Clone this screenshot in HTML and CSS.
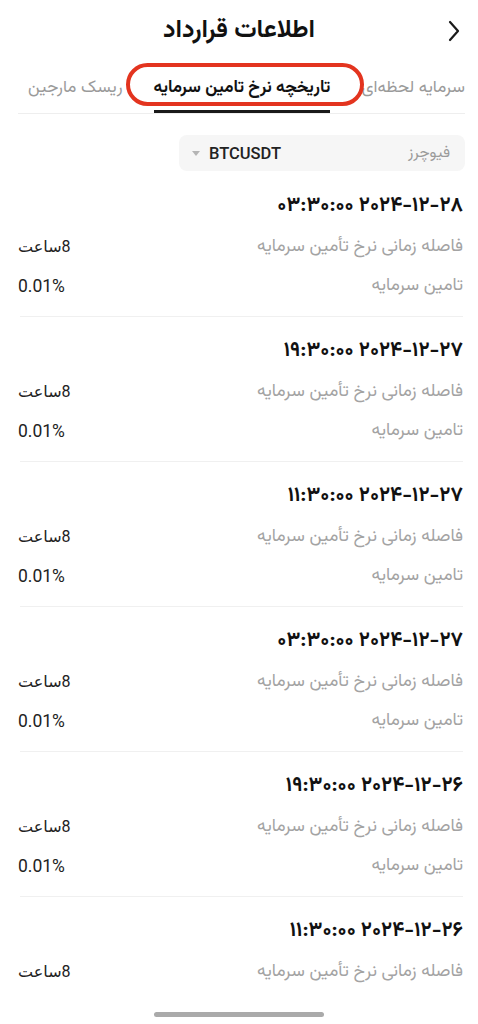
FILE: index.html
```html
<!DOCTYPE html>
<html lang="fa" dir="rtl">
<head>
<meta charset="utf-8">
<title>اطلاعات قرارداد</title>
<link rel="stylesheet" href="styles.css">
</head>
<body>
<div class="app">
  <header class="topbar">
    <div class="back">
      <svg width="12" height="22" viewBox="0 0 12 22"><path d="M2 2 L10 11 L2 20" fill="none" stroke="#1a1a1a" stroke-width="2.2" stroke-linecap="round" stroke-linejoin="round"/></svg>
    </div>
    <h1 class="title">اطلاعات قرارداد</h1>
    <div class="spacer"></div>
  </header>

  <nav class="tabs">
    <div class="tab">سرمایه لحظه‌ای</div>
    <div class="tab active">تاریخچه نرخ تامین سرمایه</div>
    <div class="tab">ریسک مارجین</div>
  </nav>

  <div class="filter-row">
    <div class="select">
      <span class="select-label">فیوچرز</span>
      <span class="select-value"><span class="sym">BTCUSDT</span><span class="caret"></span></span>
    </div>
  </div>

  <main class="records">
    <section class="record">
      <div class="date">۰۳:۳۰:۰۰ ۲۰۲۴-۱۲-۲۸</div>
      <div class="kv"><span class="k">فاصله زمانی نرخ تأمین سرمایه</span><span class="v">8ساعت</span></div>
      <div class="kv"><span class="k">تامین سرمایه</span><span class="v num">0.01%</span></div>
    </section>
    <section class="record">
      <div class="date">۱۹:۳۰:۰۰ ۲۰۲۴-۱۲-۲۷</div>
      <div class="kv"><span class="k">فاصله زمانی نرخ تأمین سرمایه</span><span class="v">8ساعت</span></div>
      <div class="kv"><span class="k">تامین سرمایه</span><span class="v num">0.01%</span></div>
    </section>
    <section class="record">
      <div class="date">۱۱:۳۰:۰۰ ۲۰۲۴-۱۲-۲۷</div>
      <div class="kv"><span class="k">فاصله زمانی نرخ تأمین سرمایه</span><span class="v">8ساعت</span></div>
      <div class="kv"><span class="k">تامین سرمایه</span><span class="v num">0.01%</span></div>
    </section>
    <section class="record">
      <div class="date">۰۳:۳۰:۰۰ ۲۰۲۴-۱۲-۲۷</div>
      <div class="kv"><span class="k">فاصله زمانی نرخ تأمین سرمایه</span><span class="v">8ساعت</span></div>
      <div class="kv"><span class="k">تامین سرمایه</span><span class="v num">0.01%</span></div>
    </section>
    <section class="record">
      <div class="date">۱۹:۳۰:۰۰ ۲۰۲۴-۱۲-۲۶</div>
      <div class="kv"><span class="k">فاصله زمانی نرخ تأمین سرمایه</span><span class="v">8ساعت</span></div>
      <div class="kv"><span class="k">تامین سرمایه</span><span class="v num">0.01%</span></div>
    </section>
    <section class="record">
      <div class="date">۱۱:۳۰:۰۰ ۲۰۲۴-۱۲-۲۶</div>
      <div class="kv"><span class="k">فاصله زمانی نرخ تأمین سرمایه</span><span class="v">8ساعت</span></div>
      <div class="kv"><span class="k">تامین سرمایه</span><span class="v num">0.01%</span></div>
    </section>
  </main>

  <div class="home-area"><div class="home-bar"></div></div>
</div>
</body>
</html>
```

FILE: styles.css
```css
* { box-sizing: border-box; }
html, body { margin: 0; padding: 0; background: #fff; }
body {
  font-family: "Vazirmatn", "Noto Sans Arabic", "DejaVu Sans", sans-serif;
  color: #1a1a1a;
  direction: rtl;
}
.app { width: 478px; }

.topbar {
  height: 60px;
  display: grid;
  grid-template-columns: 1fr auto 1fr;
  align-items: center;
}
.back {
  display: flex;
  align-items: center;
  justify-content: flex-start;
  padding-right: 18px;
  padding-top: 2px;
}
.back svg { display: block; }
.title {
  margin: 0;
  font-size: 25px;
  line-height: 34px;
  font-weight: 700;
  color: #111;
  padding-top: 2px;
}

.tabs {
  height: 54px;
  margin: 0 13px 0 18px;
  border-bottom: 1px solid #eeeeee;
  display: flex;
  align-items: stretch;
  justify-content: space-between;
  padding: 0 0 0 10px;
}
.tab {
  font-size: 17px;
  color: #9a9a9a;
  display: flex;
  align-items: center;
  padding-top: 2px;
}
.tab.active {
  position: relative;
  color: #111;
  font-weight: 700;
  border-bottom: 3px solid #1a1a1a;
  padding-top: 5px;
}
.tab.active::after {
  content: "";
  position: absolute;
  top: 3px;
  bottom: 4px;
  left: -28px;
  right: -34px;
  border: 4px solid #e3341f;
  border-radius: 22px;
}

.filter-row {
  display: flex;
  justify-content: flex-start;
  padding: 21px 13px 0 0;
}
.select {
  width: 286px;
  height: 36px;
  background: #f6f6f6;
  border-radius: 8px;
  display: flex;
  align-items: center;
  justify-content: space-between;
  padding: 0 15px 0 13px;
}
.select-label { font-size: 15.5px; color: #9a9a9a; }
.select-value { display: flex; align-items: center; gap: 9px; }
.sym {
  font-family: "Roboto", "Liberation Sans", sans-serif;
  font-size: 16.5px;
  font-weight: 500;
  color: #222;
  direction: ltr;
}
.caret {
  width: 0; height: 0;
  border-left: 4px solid transparent;
  border-right: 4px solid transparent;
  border-top: 5px solid #b5b5b5;
  margin-top: 1px;
}

.records { margin: 1px 15px 0 20px; }
.record {
  padding: 22px 0 11px;
  border-bottom: 1px solid #f0f0f0;
}
.date {
  height: 24px;
  line-height: 24px;
  font-size: 20.5px;
  font-weight: 700;
  color: #111;
  margin-bottom: 8px;
  direction: ltr;
  text-align: right;
  unicode-bidi: isolate;
}
.kv {
  height: 40px;
  display: flex;
  align-items: center;
  justify-content: space-between;
}
.kv + .kv { height: 39px; }
.k { font-size: 17.5px; color: #a3a3a3; }
.v {
  font-family: "Roboto", "DejaVu Sans", sans-serif;
  font-size: 16px;
  color: #222;
  margin-left: -2px;
}
.v.num { direction: ltr; unicode-bidi: isolate; font-size: 17.5px; }

.home-area {
  position: fixed;
  left: 0; right: 0; bottom: 0;
  height: 30px;
  background: #fff;
  display: flex;
  justify-content: center;
}
.home-bar {
  margin-top: 18px;
  width: 170px;
  height: 5px;
  border-radius: 3px;
  background: #aaaaaa;
}
```
